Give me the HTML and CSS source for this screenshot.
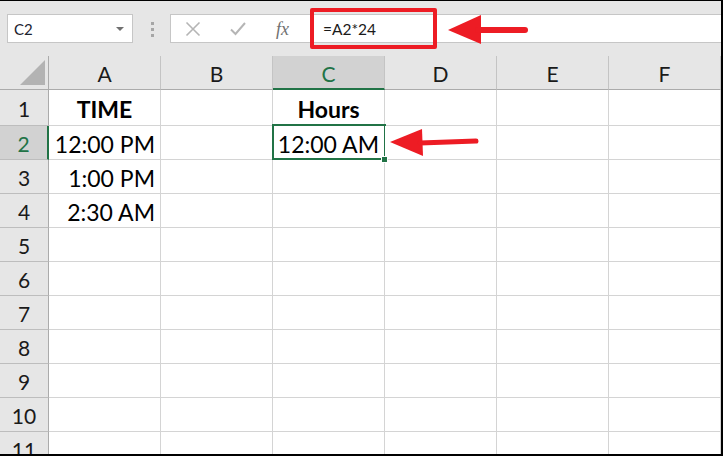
FILE: index.html
```html
<!DOCTYPE html>
<html>
<head>
<meta charset="utf-8">
<link rel="stylesheet" href="styles.css">
</head>
<body>
<div class="window">
  <div class="toolbar">
    <div class="namebox"><span class="nb-text">C2</span><span class="dd"></span></div>
    <div class="grip"><i></i><i></i><i></i></div>
    <div class="fbar">
      <div class="ficons">
        <svg class="ic" width="16" height="16" viewBox="0 0 16 16"><path d="M1.5 1.5 L14.5 14.5 M14.5 1.5 L1.5 14.5" stroke="#b5b5b5" stroke-width="1.6" fill="none"/></svg>
        <svg class="ic" width="16" height="16" viewBox="0 0 16 16"><path d="M1 8.5 L5.5 13 L15 2" stroke="#b5b5b5" stroke-width="2" fill="none"/></svg>
        <span class="fx">fx</span>
      </div>
      <div class="finput">=A2*24</div>
    </div>
  </div>
  <div class="sheet">
    <div class="hdr corner"><span class="tri"></span></div>
    <div class="hdr">A</div>
    <div class="hdr">B</div>
    <div class="hdr sel">C</div>
    <div class="hdr">D</div>
    <div class="hdr">E</div>
    <div class="hdr">F</div>

    <div class="rh">1</div>
    <div class="c ctr b">TIME</div><div class="c"></div><div class="c ctr b">Hours</div><div class="c"></div><div class="c"></div><div class="c"></div>

    <div class="rh sel">2</div>
    <div class="c">12:00 PM</div><div class="c"></div><div class="c active">12:00 AM<span class="handle"></span></div><div class="c"></div><div class="c"></div><div class="c"></div>

    <div class="rh">3</div>
    <div class="c">1:00 PM</div><div class="c"></div><div class="c"></div><div class="c"></div><div class="c"></div><div class="c"></div>

    <div class="rh">4</div>
    <div class="c">2:30 AM</div><div class="c"></div><div class="c"></div><div class="c"></div><div class="c"></div><div class="c"></div>

    <div class="rh">5</div>
    <div class="c"></div><div class="c"></div><div class="c"></div><div class="c"></div><div class="c"></div><div class="c"></div>

    <div class="rh">6</div>
    <div class="c"></div><div class="c"></div><div class="c"></div><div class="c"></div><div class="c"></div><div class="c"></div>

    <div class="rh">7</div>
    <div class="c"></div><div class="c"></div><div class="c"></div><div class="c"></div><div class="c"></div><div class="c"></div>

    <div class="rh">8</div>
    <div class="c"></div><div class="c"></div><div class="c"></div><div class="c"></div><div class="c"></div><div class="c"></div>

    <div class="rh">9</div>
    <div class="c"></div><div class="c"></div><div class="c"></div><div class="c"></div><div class="c"></div><div class="c"></div>

    <div class="rh">10</div>
    <div class="c"></div><div class="c"></div><div class="c"></div><div class="c"></div><div class="c"></div><div class="c"></div>

    <div class="rh">11</div>
    <div class="c"></div><div class="c"></div><div class="c"></div><div class="c"></div><div class="c"></div><div class="c"></div>
  </div>

  <div class="callout"></div>
  <svg class="arrows" width="723" height="456" viewBox="0 0 723 456">
    <polygon points="448,30 481,15 481,44" fill="#ed1c24"/>
    <line x1="478" y1="30" x2="525" y2="30" stroke="#ed1c24" stroke-width="6" stroke-linecap="round"/>
    <polygon points="390,142 422,129 423,156" fill="#ed1c24"/>
    <line x1="420" y1="143" x2="476" y2="141" stroke="#ed1c24" stroke-width="5" stroke-linecap="round"/>
  </svg>
</div>
</body>
</html>
```

FILE: styles.css
```css
html, body {
  margin: 0;
  padding: 0;
  background: #fff;
}

.window {
  position: relative;
  width: 723px;
  height: 456px;
  box-sizing: border-box;
  border-top: 1px solid #000;
  border-right: 2px solid #000;
  border-bottom: 2px solid #000;
  background: #e6e6e6;
  overflow: hidden;
  font-family: Lato, "Liberation Sans", sans-serif;
}

/* ---------- toolbar ---------- */
.toolbar {
  height: 51px;
  box-sizing: border-box;
  padding-top: 13px;
  display: flex;
  align-items: flex-start;
}

.namebox {
  margin-left: 7px;
  width: 126px;
  height: 29px;
  box-sizing: border-box;
  background: #fff;
  border: 1px solid #c6c6c6;
  display: flex;
  align-items: center;
  justify-content: space-between;
  padding: 0 8px 0 6px;
}

.nb-text {
  font-size: 15px;
  color: #1c2330;
  padding-top: 1px;
}

.dd {
  width: 0;
  height: 0;
  border-left: 4px solid transparent;
  border-right: 4px solid transparent;
  border-top: 4px solid #707070;
}

.grip {
  margin-left: 18px;
  padding-top: 8px;
  display: flex;
  flex-direction: column;
  gap: 3px;
}

.grip i {
  display: block;
  width: 3px;
  height: 3px;
  background: #a6a6a6;
}

.fbar {
  margin-left: 16px;
  flex: 1;
  height: 29px;
  box-sizing: border-box;
  background: #fff;
  border: 1px solid #c6c6c6;
  border-right: none;
  display: flex;
  align-items: center;
}

.ficons {
  width: 137px;
  display: flex;
  align-items: center;
  padding-left: 14px;
  box-sizing: border-box;
}

.ic {
  display: block;
}

.ficons .ic + .ic {
  margin-left: 29px;
}

.fx {
  margin-left: 30px;
  font-family: "Liberation Serif", serif;
  font-style: italic;
  font-size: 18px;
  color: #707070;
  line-height: 1;
}

.finput {
  padding-left: 15px;
  font-size: 15.5px;
  color: #1a1a1a;
  padding-top: 1px;
}

/* ---------- sheet ---------- */
.sheet {
  display: grid;
  grid-template-columns: 49px repeat(6, 112px);
  grid-template-rows: 38px 36px repeat(10, 34px);
  background: #e6e6e6;
}

.hdr {
  margin-top: 4px;
  border-right: 1px solid #c4c4c4;
  border-bottom: 1px solid #ababab;
  display: flex;
  align-items: center;
  justify-content: center;
  font-size: 21px;
  color: #1a1a1a;
  padding-top: 2px;
  box-sizing: border-box;
}

.hdr.sel {
  background: #d2d2d2;
  border-bottom: 2px solid #217346;
  color: #217346;
}

.corner {
  position: relative;
  border-right-color: #ababab;
}

.tri {
  position: absolute;
  right: 3px;
  bottom: 4px;
  width: 25px;
  height: 25px;
  background: #b3b3b3;
  clip-path: polygon(100% 0, 100% 100%, 0 100%);
}

.rh {
  background: #e6e6e6;
  border-right: 1px solid #ababab;
  border-bottom: 1px solid #bdbdbd;
  display: flex;
  align-items: center;
  justify-content: center;
  font-size: 21px;
  color: #1a1a1a;
  padding-top: 2px;
  box-sizing: border-box;
}

.rh.sel {
  background: #d2d2d2;
  color: #217346;
  border-right: 2px solid #217346;
}

.c {
  position: relative;
  background: #fff;
  border-right: 1px solid #d4d4d4;
  border-bottom: 1px solid #d4d4d4;
  display: flex;
  align-items: center;
  justify-content: flex-end;
  padding: 3px 5px 0 0;
  box-sizing: border-box;
  font-size: 23px;
  color: #000;
  white-space: nowrap;
}

.c.ctr {
  justify-content: center;
  padding-right: 0;
}

.c.b {
  font-weight: 700;
}

.c.active::after {
  content: "";
  position: absolute;
  left: -1px;
  top: -2px;
  right: -2px;
  bottom: -1px;
  border: 2px solid #217346;
}

.handle {
  position: absolute;
  right: -4px;
  bottom: -4px;
  width: 5px;
  height: 5px;
  background: #217346;
  border: 1px solid #fff;
  z-index: 2;
}

/* ---------- annotations ---------- */
.callout {
  position: absolute;
  left: 310px;
  top: 7px;
  width: 127px;
  height: 41px;
  box-sizing: border-box;
  border: 4px solid #ed1c24;
  border-radius: 2px;
}

.arrows {
  position: absolute;
  left: 0;
  top: -1px;
  pointer-events: none;
}
```
